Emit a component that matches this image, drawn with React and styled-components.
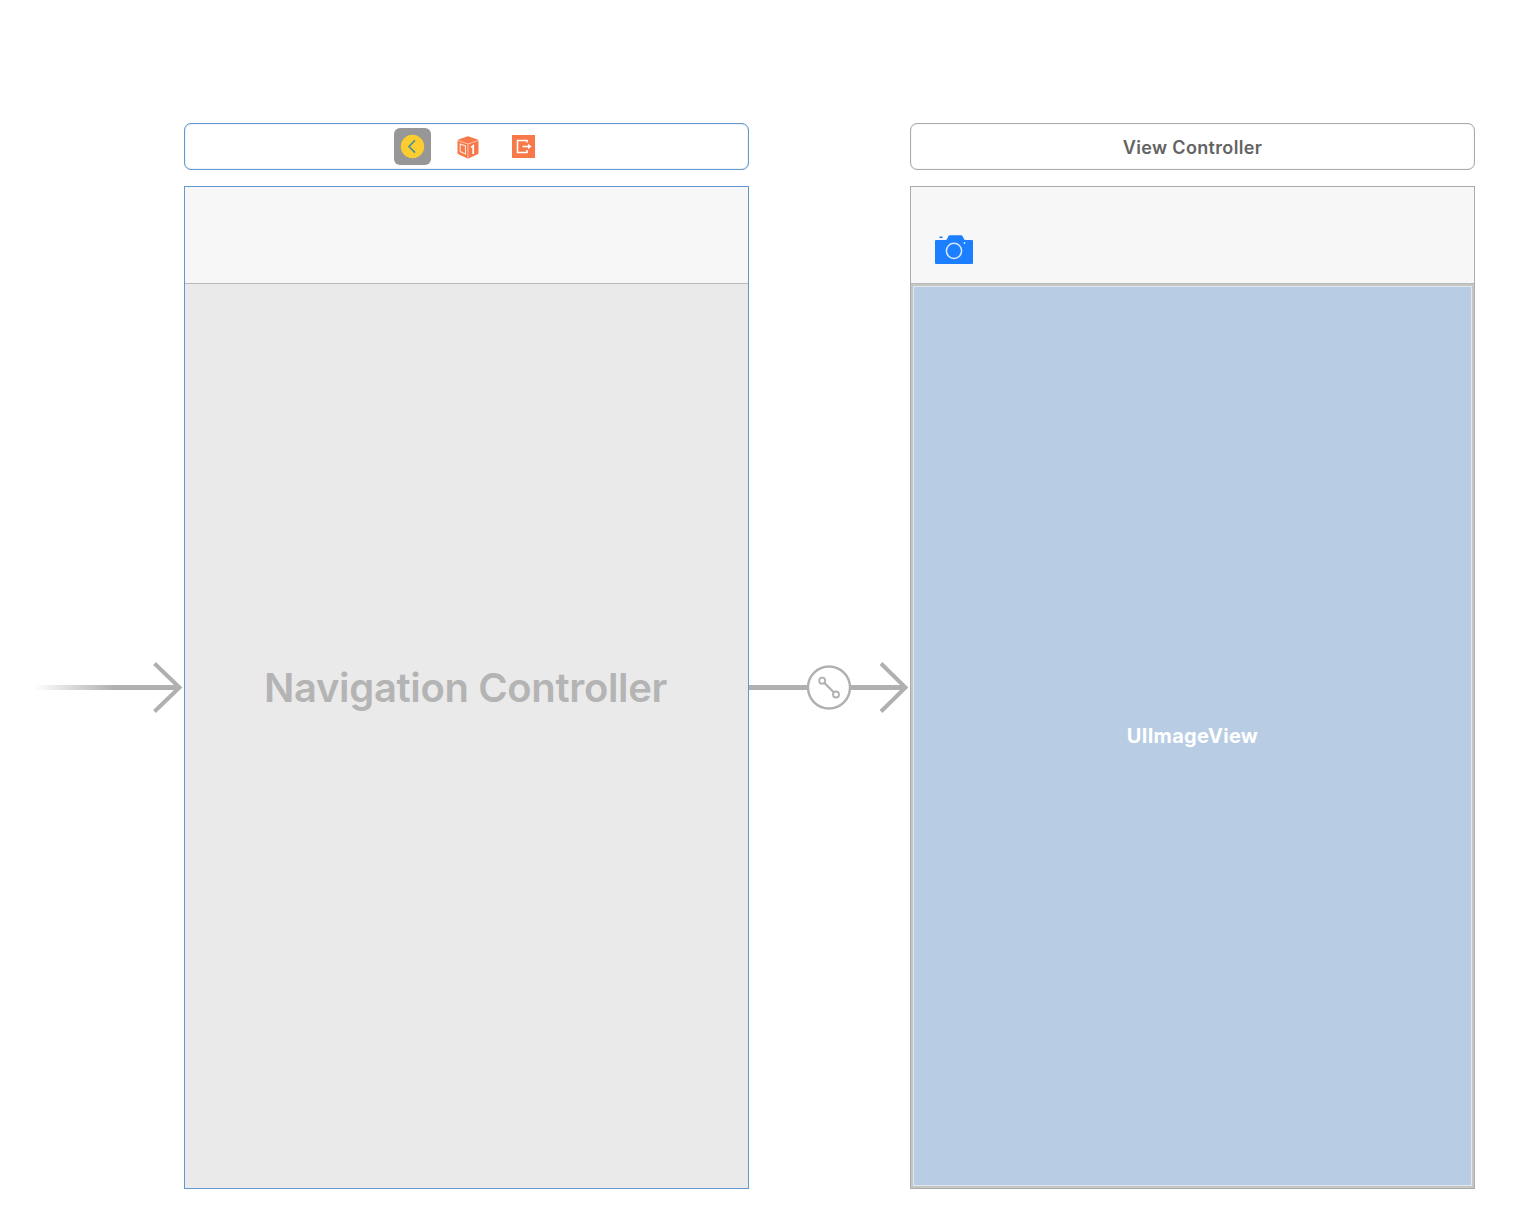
import React from "react";
import styled, { createGlobalStyle } from "styled-components";

const GlobalStyle = createGlobalStyle`
  html, body {
    margin: 0;
    background: #fff;
    font-family: Inter, "Liberation Sans", sans-serif;
  }
`;

const App = () => {
  return (
    <Board>
      <GlobalStyle />
      <SceneHeader $selected>
        <IconSlot $active>
          <BackIcon />
        </IconSlot>
        <IconSlot>
          <CubeIcon />
        </IconSlot>
        <IconSlot>
          <ExitIcon />
        </IconSlot>
      </SceneHeader>
      <TitleHeader>View Controller</TitleHeader>

      <EntryGutter>
        <EntryArrow />
      </EntryGutter>
      <SceneBody $selected>
        <NavBar />
        <NavContent>
          <NavTitle>Navigation Controller</NavTitle>
        </NavContent>
      </SceneBody>
      <SegueGutter>
        <SegueArrow />
      </SegueGutter>
      <SceneBody>
        <NavBar>
          <CameraIcon />
        </NavBar>
        <ImageContent>
          <ImageLabel>UIImageView</ImageLabel>
        </ImageContent>
      </SceneBody>
    </Board>
  );
};

const BackIcon = () => (
  <svg width="26" height="26" viewBox="0 0 26 26">
    <circle cx="12.5" cy="12.5" r="11.7" fill="#fbcd2e" />
    <path d="M15 6.3 L9 12.5 L15 18.7" fill="none" stroke="#4c8f9c" strokeWidth="1.7" />
  </svg>
);

const CubeIcon = () => (
  <svg width="24" height="24" viewBox="0 0 24 24">
    <path
      d="M11 1.4 Q12 1 13 1.4 L21.6 4.6 Q22.5 5 22.5 6 V18 Q22.5 18.8 21.6 19.2 L13 23.2 Q12 23.6 11 23.2 L2.4 19.2 Q1.5 18.8 1.5 18 V6 Q1.5 5 2.4 4.6 Z"
      fill="#f7794a"
    />
    <path d="M2 5.5 L12 9 L22 5.5" fill="none" stroke="#fbc9b4" strokeWidth="0.9" />
    <path d="M12 9 V23" fill="none" stroke="#fbc9b4" strokeWidth="0.9" />
    <path d="M4.2 9 L9.5 11 V19 L4.2 16.6 Z" fill="none" stroke="#fde3d8" strokeWidth="1.1" />
    <path d="M15 12.4 L17.2 10.8 V19" fill="none" stroke="#fff" strokeWidth="1.7" />
  </svg>
);

const ExitIcon = () => (
  <svg width="23" height="23" viewBox="0 0 23 23">
    <rect width="23" height="23" fill="#f7794a" />
    <path d="M15 7.5 V5.5 H5.5 V17.5 H15 V15" fill="none" stroke="#fff" strokeWidth="1.6" />
    <path d="M10.5 11.5 H17" fill="none" stroke="#fff" strokeWidth="1.6" />
    <path d="M16 8.7 L19.6 11.5 L16 14.3 Z" fill="#fff" />
  </svg>
);

const CameraIcon = () => (
  <svg width="38" height="29" viewBox="0 0 38 29">
    <path
      d="M1 5 H10.5 Q11.6 5 12.2 3.8 L13.2 1.6 Q13.8 0.3 15.2 0.3 H25.8 Q27.2 0.3 27.8 1.6 L28.8 3.8 Q29.4 5 30.5 5 H37 Q38 5 38 6 V28 Q38 29 37 29 H1 Q0 29 0 28 V6 Q0 5 1 5 Z"
      fill="#1b7fff"
    />
    <rect x="4.5" y="1.5" width="3" height="1.6" fill="#1b7fff" />
    <circle cx="19" cy="15.8" r="7.6" fill="none" stroke="#d5e8ff" strokeWidth="1.5" />
    <circle cx="29.5" cy="8" r="0.9" fill="#d5e8ff" />
  </svg>
);

const EntryArrow = () => (
  <svg width="150" height="52" viewBox="0 0 150 52">
    <defs>
      <linearGradient id="entryFade" x1="0" y1="0" x2="1" y2="0">
        <stop offset="0" stopColor="#b0b0b0" stopOpacity="0" />
        <stop offset="0.55" stopColor="#b0b0b0" />
        <stop offset="1" stopColor="#b0b0b0" />
      </linearGradient>
    </defs>
    <rect x="0" y="23" width="146" height="5" fill="url(#entryFade)" />
    <path d="M120.5 1.5 L145.5 25.5 L120.5 49.5" fill="none" stroke="#b0b0b0" strokeWidth="4" />
  </svg>
);

const SegueArrow = () => (
  <svg width="161" height="52" viewBox="0 0 161 52">
    <rect x="0" y="23" width="58" height="5" fill="#b0b0b0" />
    <rect x="102" y="23" width="55" height="5" fill="#b0b0b0" />
    <circle cx="80" cy="25.5" r="21" fill="#fff" stroke="#b0b0b0" strokeWidth="2.4" />
    <path d="M75 20.5 L85 30.5" stroke="#b0b0b0" strokeWidth="2.2" />
    <circle cx="73.2" cy="18.7" r="3" fill="#fff" stroke="#b0b0b0" strokeWidth="1.8" />
    <circle cx="87" cy="32.5" r="3" fill="#fff" stroke="#b0b0b0" strokeWidth="1.8" />
    <path d="M132 1.5 L156.5 25.5 L132 49.5" fill="none" stroke="#b0b0b0" strokeWidth="4" />
  </svg>
);

const Board = styled.div`
  display: grid;
  grid-template-columns: 184px 565px 161px 565px;
  grid-template-rows: 47px 1003px;
  row-gap: 16px;
  padding: 123px 0 17px;
  width: 1532px;
  box-sizing: border-box;
`;

const SceneHeader = styled.div`
  grid-column: 2;
  display: flex;
  align-items: center;
  justify-content: center;
  gap: 18.5px;
  padding-left: 3px;
  box-sizing: border-box;
  border: 1px solid #6497cf;
  box-shadow: inset 0 0 1px #6497cf;
  border-radius: 7px;
`;

const TitleHeader = styled.div`
  grid-column: 4;
  display: flex;
  align-items: center;
  justify-content: center;
  padding-top: 2px;
  box-sizing: border-box;
  border: 1px solid #ababab;
  box-shadow: inset 0 0 1px #ababab;
  border-radius: 7px;
  font-size: 18px;
  font-weight: 600;
  letter-spacing: 0.35px;
  color: #636363;
`;

const IconSlot = styled.div`
  width: 37px;
  height: 37px;
  display: flex;
  align-items: center;
  justify-content: center;
  border-radius: 6px;
  background: ${(p) => (p.$active ? "#979797" : "transparent")};
`;

const EntryGutter = styled.div`
  display: flex;
  align-items: center;
  justify-content: flex-end;
`;

const SegueGutter = styled.div`
  display: flex;
  align-items: center;
`;

const SceneBody = styled.div`
  display: flex;
  flex-direction: column;
  box-sizing: border-box;
  border: 1px solid ${(p) => (p.$selected ? "#6497cf" : "#ababab")};
`;

const NavBar = styled.div`
  height: 97px;
  flex: none;
  display: flex;
  align-items: flex-end;
  padding: 0 0 19px 24px;
  box-sizing: border-box;
  background: #f7f7f7;
  border-bottom: 1px solid #b9b9b9;
`;

const NavContent = styled.div`
  flex: 1;
  display: flex;
  align-items: center;
  justify-content: center;
  padding-right: 2px;
  background: #eaeaea;
`;

const NavTitle = styled.div`
  position: relative;
  top: -49px;
  font-size: 40px;
  font-weight: 600;
  letter-spacing: -0.35px;
  color: #b4b4b4;
`;

const ImageContent = styled.div`
  flex: 1;
  display: flex;
  align-items: center;
  justify-content: center;
  background: #b8cde4;
  box-sizing: border-box;
  box-shadow: inset 0 0 0 2px #c6c6c6, inset 0 0 0 3px #e2e7ee;
`;

const ImageLabel = styled.div`
  font-size: 20px;
  font-weight: 700;
  letter-spacing: 0.3px;
  color: #fff;
`;

export default App;
